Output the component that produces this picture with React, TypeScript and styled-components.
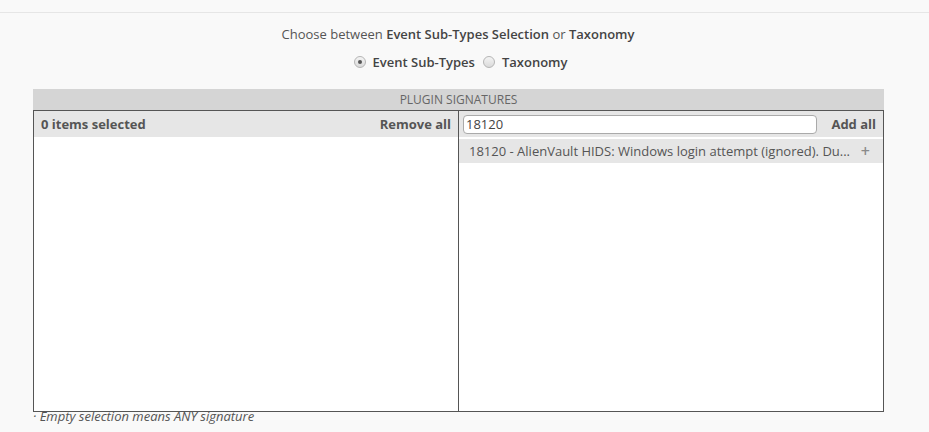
import React from "react";
import styled, { createGlobalStyle } from "styled-components";

const Global = createGlobalStyle`
  html, body { margin: 0; padding: 0; background: #f9f9f9; }
  body { font-family: "Open Sans", "Liberation Sans", sans-serif; font-size: 13px; color: #555; }
`;

const Page = styled.div`
  width: 929px;
  height: 432px;
  overflow: hidden;
  padding-top: 12px;
  box-sizing: border-box;
`;

const TopRule = styled.div`
  height: 1px;
  background: #e6e6e6;
`;

const Intro = styled.div`
  text-align: center;
  margin-top: 12px;
  padding-right: 13px;
  line-height: 18px;
  font-size: 13px;
  color: #555;
  b { font-weight: 600; color: #444; }
`;

const RadioRow = styled.div`
  display: flex;
  justify-content: center;
  align-items: center;
  gap: 8px;
  margin-top: 10px;
  height: 18px;
  padding-right: 8px;
`;

const RadioLabel = styled.label`
  display: flex;
  align-items: center;
  gap: 7px;
  font-weight: 600;
  color: #444;
  font-size: 13px;
`;

const RadioDot = styled.span<{ $on?: boolean }>`
  width: 12px;
  height: 12px;
  border-radius: 50%;
  box-sizing: border-box;
  border: 1px solid #b5b5b5;
  background: linear-gradient(#f4f4f4, #dadada);
  display: inline-flex;
  align-items: center;
  justify-content: center;
  &::after {
    content: "";
    width: 4px;
    height: 4px;
    border-radius: 50%;
    background: ${(p) => (p.$on ? "#555" : "transparent")};
  }
`;

const Widget = styled.div`
  margin: 18px 0 0 33px;
  width: 851px;
`;

const Title = styled.div`
  height: 21px;
  line-height: 21px;
  background: #d5d5d5;
  text-align: center;
  font-size: 12px;
  color: #666;
`;

const Box = styled.div`
  border: 1px solid #555;
  height: 300px;
  display: grid;
  grid-template-columns: 424px 1fr;
  background: #fff;
`;

const Column = styled.div<{ $divider?: boolean }>`
  display: flex;
  flex-direction: column;
  border-left: ${(p) => (p.$divider ? "1px solid #555" : "none")};
`;

const Toolbar = styled.div`
  height: 26px;
  background: #e6e6e6;
  display: flex;
  align-items: center;
  justify-content: space-between;
  padding: 0 7px 0 7px;
  font-weight: 700;
  font-size: 13px;
  color: #555;
`;

const SearchBar = styled(Toolbar)`
  padding: 0 7px 0 4px;
  border-bottom: 2px solid #fff;
`;

const Search = styled.input`
  width: 354px;
  height: 19px;
  box-sizing: border-box;
  border: 1px solid #aaa;
  border-radius: 4px;
  background: #fff;
  padding: 0 2px;
  font-family: "Open Sans", "Liberation Sans", sans-serif;
  font-size: 13px;
  color: #444;
  outline: none;
`;

const Item = styled.div`
  height: 24px;
  background: #e6e6e6;
  display: flex;
  align-items: center;
  justify-content: space-between;
  padding: 0 13px 0 10px;
  font-size: 13px;
  color: #555;
`;

const AddMark = styled.span`
  color: #8a8a8a;
  font-size: 16px;
  font-weight: 600;
  line-height: 1;
`;

const Note = styled.div`
  margin: -5px 0 0 33px;
  font-style: italic;
  font-size: 13px;
  color: #555;
`;

export default function App() {
  return (
    <Page>
      <Global />
      <TopRule />
      <Intro>
        Choose between <b>Event Sub-Types Selection</b> or <b>Taxonomy</b>
      </Intro>
      <RadioRow>
        <RadioLabel>
          <RadioDot $on />
          Event Sub-Types
        </RadioLabel>
        <RadioLabel>
          <RadioDot />
          Taxonomy
        </RadioLabel>
      </RadioRow>
      <Widget>
        <Title>PLUGIN SIGNATURES</Title>
        <Box>
          <Column>
            <Toolbar>
              <span>0 items selected</span>
              <span>Remove all</span>
            </Toolbar>
          </Column>
          <Column $divider>
            <SearchBar>
              <Search defaultValue="18120" />
              <span>Add all</span>
            </SearchBar>
            <Item>
              <span>18120 - AlienVault HIDS: Windows login attempt (ignored). Du...</span>
              <AddMark>+</AddMark>
            </Item>
          </Column>
        </Box>
      </Widget>
      <Note>· Empty selection means ANY signature</Note>
    </Page>
  );
}
